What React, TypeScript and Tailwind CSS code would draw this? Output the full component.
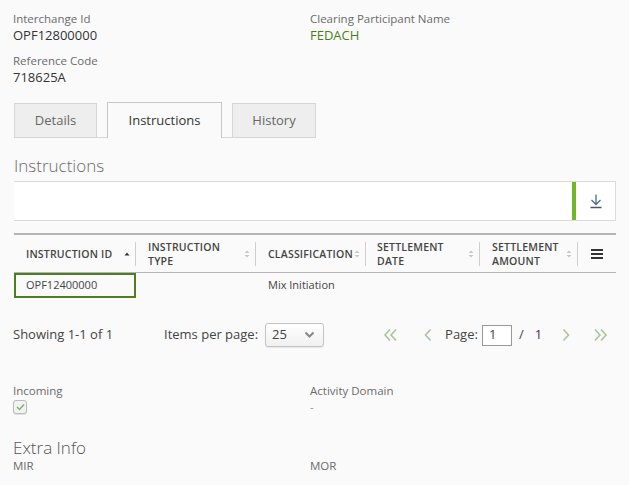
import React from "react";

const SortIcon = ({ active }: { active?: boolean }) =>
  active ? (
    <svg width="8" height="8" viewBox="0 0 8 8" className="shrink-0">
      <path d="M1.5 5.5 L4 2.5 L6.5 5.5 Z" fill="#333" />
    </svg>
  ) : (
    <svg width="8" height="10" viewBox="0 0 8 10" className="shrink-0">
      <path d="M1.5 4 L4 1.5 L6.5 4 Z" fill="#c8c8c8" />
      <path d="M1.5 6 L4 8.5 L6.5 6 Z" fill="#c8c8c8" />
    </svg>
  );

const Field = ({ label, value, green }: { label: string; value: string; green?: boolean }) => (
  <div className="flex flex-col">
    <span className="text-[11.5px] leading-[16px] text-[#6b6b6b]">{label}</span>
    <span className={`text-[13px] leading-[17px] ${green ? "text-[#4a7f17]" : "text-[#333]"}`}>{value}</span>
  </div>
);

export default function App() {
  return (
    <div className="w-[629px] h-[485px] overflow-hidden bg-[#fafafa]" style={{ fontFamily: '"Open Sans", sans-serif' }}>
      <div className="pl-[13px] pr-[13px] pt-[11px]">
        <div className="grid grid-cols-[297px_1fr]">
          <div className="flex flex-col gap-[9px]">
            <Field label="Interchange Id" value="OPF12800000" />
            <Field label="Reference Code" value="718625A" />
          </div>
          <div>
            <Field label="Clearing Participant Name" value="FEDACH" green />
          </div>
        </div>

        {/* Tabs */}
        <div className="flex mt-[16px] pl-[1px] items-end">
          <div className="w-[83px] h-[35px] bg-[#eeeeee] border border-[#d6d6d6] flex items-center justify-center text-[13px] text-[#666]">Details</div>
          <div className="w-[10px] h-[35px] border-b border-[#d6d6d6]" />
          <div className="w-[115px] h-[36px] bg-[#fafafa] border border-b-0 border-[#c8c8c8] flex items-center justify-center text-[13px] text-[#333]">Instructions</div>
          <div className="w-[10px] h-[35px] border-b border-[#d6d6d6]" />
          <div className="w-[84px] h-[35px] bg-[#eeeeee] border border-[#d6d6d6] flex items-center justify-center text-[13px] text-[#666]">History</div>
        </div>

        <div className="mt-[17px] pl-[1px] text-[17px] leading-[22px] font-light text-[#6b6b6b]">Instructions</div>

        {/* toolbar */}
        <div className="mt-[4px] ml-[1px] w-[602px] h-[40px] bg-white border-y border-[#dcdcdc] flex justify-end">
          <div className="w-[4px] bg-[#72b62a]" />
          <div className="w-[40px] border-r border-[#dcdcdc] flex items-center justify-center">
            <svg width="14" height="16" viewBox="0 0 14 16">
              <path d="M7 1.5 V11 M2.5 7 L7 11.5 L11.5 7" stroke="#4a6a96" strokeWidth="1.3" fill="none" />
              <path d="M1.5 14.5 H12.5" stroke="#4a5568" strokeWidth="1.5" />
            </svg>
          </div>
        </div>

        {/* table */}
        <div className="mt-[12px] ml-[1px] w-[602px]">
          <div className="flex h-[40px] border-t-2 border-b border-t-[#b5b5b5] border-b-[#b5b5b5] text-[10.5px] leading-[14px] font-semibold text-[#444] tracking-[0.2px]">
            {[
              { w: 122, lines: ["INSTRUCTION ID"], active: true },
              { w: 120, lines: ["INSTRUCTION", "TYPE"] },
              { w: 109, lines: ["CLASSIFICATION"] },
              { w: 115, lines: ["SETTLEMENT", "DATE"] },
              { w: 98, lines: ["SETTLEMENT", "AMOUNT"] },
            ].map((c, i) => (
              <div key={i} className="flex items-center" style={{ width: c.w }}>
                <div className="flex-1 flex items-center pl-[12px] pr-[4px] justify-between">
                  <div className="flex flex-col">
                    {c.lines.map((l) => (
                      <span key={l} className="whitespace-nowrap">{l}</span>
                    ))}
                  </div>
                  <SortIcon active={c.active} />
                </div>
                <div className="w-px h-[24px] bg-[#cfcfcf]" />
              </div>
            ))}
            <div className="flex-1 flex items-center justify-center">
              <svg width="14" height="12" viewBox="0 0 14 12">
                <path d="M1 2 H13 M1 6 H13 M1 10 H13" stroke="#333" strokeWidth="2" />
              </svg>
            </div>
          </div>
          <div className="flex h-[25px] text-[11px] text-[#444]">
            <div className="w-[122px] border-2 border-[#4e7d22] flex items-center pl-[10px]">OPF12400000</div>
            <div className="w-[120px]" />
            <div className="flex items-center pl-[12px]">Mix Initiation</div>
          </div>
        </div>

        {/* pagination */}
        <div className="mt-[24px] flex items-center h-[26px] text-[13px] text-[#444]">
          <span className="w-[151px]">Showing 1-1 of 1</span>
          <span className="mr-[7px]">Items per page:</span>
          <div className="w-[59px] h-[24px] border border-[#c4c4c4] rounded-[3px] bg-gradient-to-b from-white to-[#f0f0f0] flex items-center justify-between pl-[6px] pr-[8px] shadow-[0_1px_1px_rgba(0,0,0,0.08)]">
            <span>25</span>
            <svg width="11" height="8" viewBox="0 0 11 8">
              <path d="M1.5 1.5 L5.5 5.5 L9.5 1.5" stroke="#888" strokeWidth="2" fill="none" />
            </svg>
          </div>
          <div className="ml-[59px] flex items-center">
            <svg width="16" height="14" viewBox="0 0 16 14">
              <path d="M7 1.5 L2 7 L7 12.5 M13 1.5 L8 7 L13 12.5" stroke="#a8c59a" strokeWidth="1.6" fill="none" />
            </svg>
            <svg width="10" height="14" viewBox="0 0 10 14" className="ml-[24px]">
              <path d="M7.5 1.5 L2.5 7 L7.5 12.5" stroke="#a8c59a" strokeWidth="1.6" fill="none" />
            </svg>
            <span className="ml-[12px]">Page:</span>
            <div className="ml-[4px] w-[30px] h-[21px] border border-[#999] bg-white flex items-center pl-[6px]">1</div>
            <span className="ml-[7px] text-[#445]">/</span>
            <span className="ml-[11px] text-[#4b2a5e]">1</span>
            <svg width="10" height="14" viewBox="0 0 10 14" className="ml-[19px]">
              <path d="M2.5 1.5 L7.5 7 L2.5 12.5" stroke="#a8c59a" strokeWidth="1.6" fill="none" />
            </svg>
            <svg width="16" height="14" viewBox="0 0 16 14" className="ml-[21px]">
              <path d="M3 1.5 L8 7 L3 12.5 M9 1.5 L14 7 L9 12.5" stroke="#a8c59a" strokeWidth="1.6" fill="none" />
            </svg>
          </div>
        </div>

        {/* Incoming / Activity */}
        <div className="mt-[35px] grid grid-cols-[297px_1fr] text-[11.5px] leading-[16px] text-[#6b6b6b]">
          <div className="flex flex-col">
            <span>Incoming</span>
            <div className="mt-[1px] w-[14px] h-[14px] border border-[#bbb] rounded-[3px] bg-[#f2f2f2] flex items-center justify-center shadow-[0_1px_1px_rgba(0,0,0,0.1)]">
              <svg width="9" height="8" viewBox="0 0 9 8">
                <path d="M1 4 L3.5 6.5 L8 1.5" stroke="#7fb26b" strokeWidth="1.5" fill="none" />
              </svg>
            </div>
          </div>
          <div className="flex flex-col">
            <span>Activity Domain</span>
            <span className="text-[#999]">-</span>
          </div>
        </div>

        <div className="mt-[22px] text-[17px] leading-[22px] font-light text-[#555]">Extra Info</div>
        <div className="grid grid-cols-[297px_1fr] text-[11.5px] leading-[14px] text-[#6b6b6b]">
          <span>MIR</span>
          <span>MOR</span>
        </div>
      </div>
    </div>
  );
}
